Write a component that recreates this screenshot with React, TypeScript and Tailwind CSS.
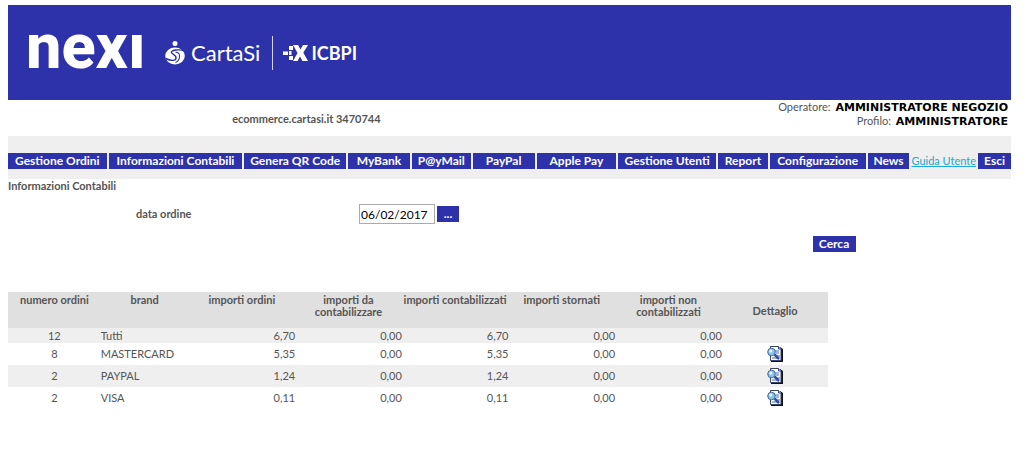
import React from "react";

const navItems = [
  { label: "Gestione Ordini", size: "basis-[99px]" },
  { label: "Informazioni Contabili", size: "basis-[134px]" },
  { label: "Genera QR Code", size: "basis-[102px]" },
  { label: "MyBank", size: "basis-[62px]" },
  { label: "P@yMail", size: "basis-[59px]" },
  { label: "PayPal", size: "basis-[62px]" },
  { label: "Apple Pay", size: "basis-[80px]" },
  { label: "Gestione Utenti", size: "basis-[98px]" },
  { label: "Report", size: "basis-[50px]" },
  { label: "Configurazione", size: "basis-[96px]" },
  { label: "News", size: "basis-[42px]" },
];

const columns = [
  { label: "numero ordini", width: "w-[11.300%]" },
  { label: "brand", width: "w-[10.700%]" },
  { label: "importi ordini", width: "w-[13%]" },
  { label: "importi da contabilizzare", width: "w-[13%]" },
  { label: "importi contabilizzati", width: "w-[13%]" },
  { label: "importi stornati", width: "w-[13%]" },
  { label: "importi non contabilizzati", width: "w-[13%]" },
];

const rows = [
  { count: "12", brand: "Tutti", amounts: ["6,70", "0,00", "6,70", "0,00", "0,00"], detail: false },
  { count: "8", brand: "MASTERCARD", amounts: ["5,35", "0,00", "5,35", "0,00", "0,00"], detail: true },
  { count: "2", brand: "PAYPAL", amounts: ["1,24", "0,00", "1,24", "0,00", "0,00"], detail: true },
  { count: "2", brand: "VISA", amounts: ["0,11", "0,00", "0,11", "0,00", "0,00"], detail: true },
];

const blueButton =
  "h-4 bg-[#2d32aa] text-center text-[12px] leading-4 font-bold whitespace-nowrap text-white";

function CartaSiMark() {
  return (
    <svg className="h-6 w-5" viewBox="0 0 20 24" fill="none" aria-hidden="true">
      <circle cx="10" cy="2.500" r="2.500" fill="white" />
      <ellipse cx="10" cy="15" rx="9.800" ry="8.500" fill="white" />
      <path
        d="M19.500 9.500C14 8.300 7 8.800 6.300 11.200C6 13.300 11 13.200 11 17C11 19.800 6.500 20.300 .5 17.500"
        stroke="#2d32aa"
        strokeWidth="1.400"
      />
      <path d="M10.500 11.200C13.500 11 14.800 13 14.500 16C14.300 18.500 13 20.500 10.500 21.500" stroke="#2d32aa" strokeWidth="1.100" />
    </svg>
  );
}

function IcbpiMark() {
  return (
    <svg className="h-4 w-[25px]" viewBox="0 0 25 16" fill="white" aria-hidden="true">
      <path d="M0 6.500h5v3.500H0zM6 1h4v4H6zM6 6h2.500v4H6zM6 11h4v4H6z" />
      <path d="M10 0h5l2.500 4.500L20 0h5l-4.700 7.800L25 16h-5.500L17 11.500 14.500 16H10l4.500-8z" />
    </svg>
  );
}

function DetailIcon() {
  return (
    <svg className="h-4 w-4" viewBox="0 0 16 16" aria-hidden="true">
      <path d="M4 1h9l3 2v13H4z" fill="#10131c" />
      <path d="M3.500 .5h8l2.500 2.500v11.500H3.500z" fill="#fff" stroke="#37436b" />
      <path d="M11.500 .5V3H14" fill="#cfe0f5" stroke="#37436b" />
      <path d="M8 5h4M9 7h3M9 10h4M5 12h5" stroke="#4565c4" />
      <path d="M7.500 8.500 12 13" stroke="#2d4fa8" strokeWidth="2.500" />
      <circle cx="4.500" cy="6" r="3.800" fill="#8cc3ea" stroke="#3f6a9c" />
      <circle cx="3.800" cy="5" r="1.500" fill="#e9fbff" />
    </svg>
  );
}

export default function App() {
  return (
    <div className="min-h-screen bg-white pt-[5px] pr-[13px] pl-2 font-['Lato','Noto_Sans',sans-serif] text-[11px] leading-3 text-[#555]">
      <header className="flex h-[95px] items-center bg-[#2d32aa] pl-[18px] text-white">
        <div className="h-[60px] w-[117px] font-['Roboto',sans-serif] text-[63px] leading-[48px] font-extrabold">nexı</div>
        <div className="ml-[22px] flex items-center">
          <CartaSiMark />
          <span className="ml-1.5 text-[22px] leading-7">CartaSi</span>
          <span className="mr-2.5 ml-3 h-[34px] w-px bg-white/80" />
          <IcbpiMark />
          <span className="ml-[3px] text-[18px] leading-7 font-bold">ICBPI</span>
        </div>
      </header>

      <section className="grid h-9 grid-cols-[59.500%_1fr]">
        <p className="pt-[13px] text-center font-bold">ecommerce.cartasi.it 3470744</p>
        <dl className="pr-[3px] text-right leading-[13px]">
          <div>
            <dt className="inline">Operatore:</dt>{" "}
            <dd className="ml-0.5 inline font-['DejaVu_Sans',sans-serif] font-bold text-black">AMMINISTRATORE NEGOZIO</dd>
          </div>
          <div>
            <dt className="inline">Profilo:</dt>{" "}
            <dd className="ml-0.5 inline font-['DejaVu_Sans',sans-serif] font-bold text-black">AMMINISTRATORE</dd>
          </div>
        </dl>
      </section>

      <nav className="flex h-[43px] items-center gap-0.5 bg-[#efefef] pt-1.5">
        {navItems.map((item) => (
          <button key={item.label} type="button" className={`${blueButton} ${item.size} grow`}>
            {item.label}
          </button>
        ))}
        <a href="#guida" className="shrink-0 grow basis-[62px] text-center text-[11px] whitespace-nowrap text-[#22a9cc] underline">
          Guida Utente
        </a>
        <button type="button" className={`${blueButton} grow basis-[33px]`}>
          Esci
        </button>
      </nav>

      <main className="pt-px">
        <h1 className="font-bold">Informazioni Contabili</h1>
        <form onSubmit={(event) => event.preventDefault()}>
          <div className="mt-3 grid grid-cols-[35%_1fr] items-center">
            <label htmlFor="data-ordine" className="pl-32 font-bold">
              data ordine
            </label>
            <div className="flex items-center gap-0.5">
              <input
                id="data-ordine"
                type="text"
                defaultValue="06/02/2017"
                className="h-5 w-[76px] border border-[#aaa] bg-white px-px text-[12px] text-black"
              />
              <button type="button" aria-label="Scegli data" className={`${blueButton} w-[22px]`}>
                ...
              </button>
            </div>
          </div>
          <div className="mt-3 flex w-[84.500%] justify-end">
            <button type="submit" className={`${blueButton} w-[43px]`}>
              Cerca
            </button>
          </div>
        </form>

        <table className="mt-10 w-[81.800%] table-fixed border-collapse">
          <thead>
            <tr className="h-9 bg-[#e0e0e0]">
              {columns.map((column) => (
                <th key={column.label} className={`${column.width} pt-0.5 text-center align-top font-bold`}>
                  {column.label}
                </th>
              ))}
              <th className="w-[13%] pt-0.5 text-center align-middle font-bold">Dettaglio</th>
            </tr>
          </thead>
          <tbody>
            {rows.map((row) => (
              <tr key={row.brand} className={`odd:bg-[#efefef] ${row.detail ? "h-[22px]" : "h-[15px]"}`}>
                <td className="text-center">{row.count}</td>
                <td className="text-left">{row.brand}</td>
                {row.amounts.map((amount, index) => (
                  <td key={index} className="text-right">
                    {amount}
                  </td>
                ))}
                <td>
                  {row.detail && (
                    <button type="button" aria-label={`Dettaglio ${row.brand}`} className="mx-auto block h-4 w-4">
                      <DetailIcon />
                    </button>
                  )}
                </td>
              </tr>
            ))}
          </tbody>
        </table>
      </main>
    </div>
  );
}
